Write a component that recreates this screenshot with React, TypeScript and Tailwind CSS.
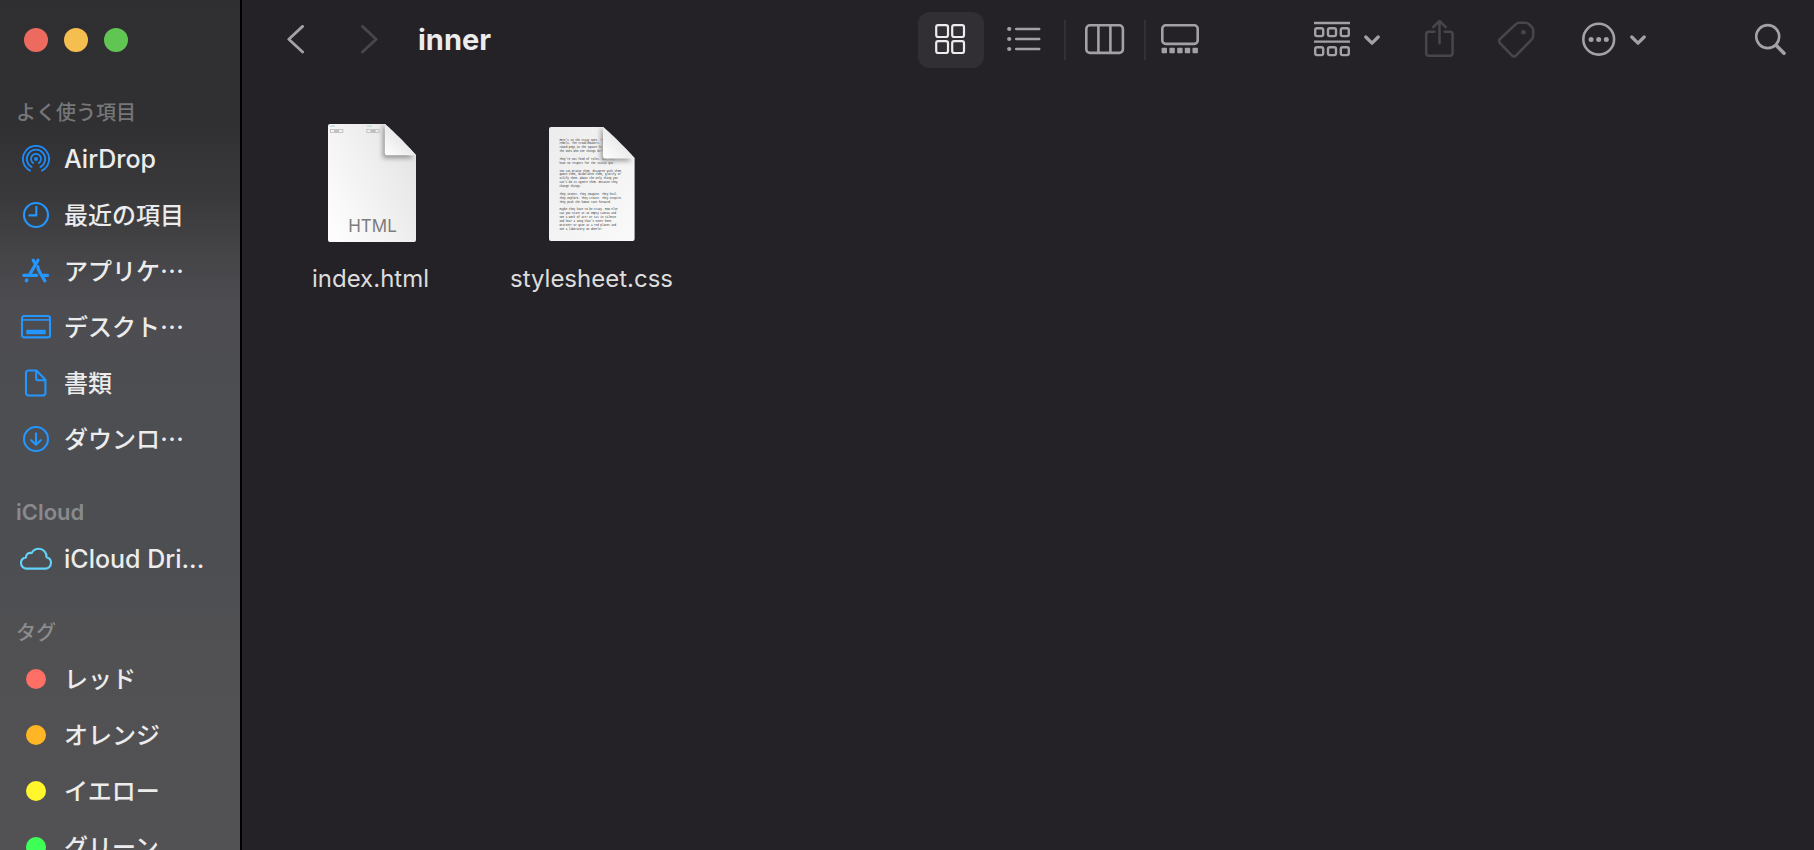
import type { ComponentProps, ComponentType, ReactNode } from 'react'

type SvgProps = ComponentProps<'svg'>

const AirDropIcon = (props: SvgProps) => (
  <svg width="28" height="28" viewBox="0 0 28 28" fill="none" stroke="#1e8bfa" strokeWidth="1.8" strokeLinecap="round" {...props}>
    <circle cx="14" cy="14" r="2" fill="#1e8bfa" stroke="none" />
    <path d="M11.2 18A5 5 0 1 1 16.8 18" />
    <path d="M9.6 22A9.2 9.2 0 1 1 18.4 22" />
    <path d="M8 25.6A13.1 13.1 0 1 1 20 25.6" />
  </svg>
)

const ClockIcon = (props: SvgProps) => (
  <svg width="28" height="28" viewBox="0 0 28 28" fill="none" stroke="#2396ff" strokeWidth="2.1" strokeLinecap="round" strokeLinejoin="round" {...props}>
    <circle cx="14" cy="14" r="12" />
    <path d="M14.3 5.8V14.4H7.4" />
  </svg>
)

const AppsIcon = (props: SvgProps) => (
  <svg width="28" height="28" viewBox="0 0 28 28" fill="none" stroke="#2396ff" strokeLinecap="round" strokeLinejoin="round" {...props}>
    <path d="M11.2 3.2L13.4 6.8M16 3.2L8.2 16.6" strokeWidth="3.2" />
    <path d="M1.8 18.3H14.8M21.4 18.3H25.6" strokeWidth="3.2" />
    <path d="M4.8 23L4.4 23.8" strokeWidth="3.4" />
    <path d="M15.8 9.6C15.8 12 17 13.8 18.4 16.2L22.9 23.9" strokeWidth="3.2" />
  </svg>
)

const DesktopIcon = (props: SvgProps) => (
  <svg width="32" height="28" viewBox="0 0 32 28" fill="none" stroke="#2396ff" strokeWidth="2.1" {...props}>
    <rect x="2" y="3" width="28" height="21.4" rx="2.2" />
    <path d="M2 6.9H30" strokeWidth="1.6" />
    <rect x="6.2" y="16.8" width="19.6" height="4.4" rx="1" fill="#2396ff" stroke="none" />
  </svg>
)

const DocumentIcon = (props: SvgProps) => (
  <svg width="28" height="28" viewBox="0 0 28 28" fill="none" stroke="#2396ff" strokeWidth="2.1" strokeLinejoin="round" {...props}>
    <path d="M6.3 1.5H14.4L23.4 10.8V24.2A2.3 2.3 0 0 1 21.1 26.5H6.3A2.3 2.3 0 0 1 4 24.2V3.8A2.3 2.3 0 0 1 6.3 1.5Z" />
    <path d="M14.2 2V9.6A1.6 1.6 0 0 0 15.8 11.2H23" />
  </svg>
)

const DownloadIcon = (props: SvgProps) => (
  <svg width="28" height="28" viewBox="0 0 28 28" fill="none" stroke="#2396ff" strokeWidth="2.1" strokeLinecap="round" strokeLinejoin="round" {...props}>
    <circle cx="14" cy="14" r="12" />
    <path d="M14 8.4V19.4M9.2 15.2L14 19.8L18.8 15.2" />
  </svg>
)

const CloudIcon = (props: SvgProps) => (
  <svg width="34" height="28" viewBox="0 0 34 28" fill="none" stroke="#62d2f8" strokeWidth="2.1" strokeLinejoin="round" {...props}>
    <path d="M7.6 23.6H26.4A5.7 5.7 0 0 0 32 18C32 15 30 12.9 27.6 12.3C27.7 7.4 24.3 3.8 19.8 3.8C16.6 3.8 14 5.3 12.7 8.1C9.6 7.2 7 9.2 6.9 12.4C4.1 13 2 15.2 2 18.1A5.6 5.6 0 0 0 7.6 23.6Z" />
  </svg>
)

const GridIcon = (props: SvgProps) => (
  <svg width="32" height="32" viewBox="0 0 32 32" fill="none" stroke="#ececed" strokeWidth="2.2" {...props}>
    <rect x="1.2" y="1.2" width="11.8" height="11.8" rx="2" />
    <rect x="17.2" y="1.2" width="11.8" height="11.8" rx="2" />
    <rect x="1.2" y="17.2" width="11.8" height="11.8" rx="2" />
    <rect x="17.2" y="17.2" width="11.8" height="11.8" rx="2" />
  </svg>
)

const ListIcon = (props: SvgProps) => (
  <svg width="34" height="26" viewBox="0 0 34 26" fill="#a3a1a6" stroke="#a3a1a6" strokeWidth="2.5" strokeLinecap="round" {...props}>
    <path d="M9.2 2H32.2M9.2 12H32.2M9.2 22H32.2" />
    <g stroke="none">
      <circle cx="2.2" cy="2" r="2.1" />
      <circle cx="2.2" cy="12" r="2.1" />
      <circle cx="2.2" cy="22" r="2.1" />
    </g>
  </svg>
)

const ColumnsIcon = (props: SvgProps) => (
  <svg width="40" height="32" viewBox="0 0 40 32" fill="none" stroke="#a3a1a6" strokeWidth="2.6" {...props}>
    <rect x="1.3" y="1.3" width="36.6" height="27.6" rx="3.6" />
    <path d="M13.4 1V29M25.4 1V29" />
  </svg>
)

const GalleryIcon = (props: SvgProps) => (
  <svg width="38" height="32" viewBox="0 0 38 32" fill="#a3a1a6" {...props}>
    <rect x="1.3" y="1.3" width="35.4" height="18.6" rx="3.4" fill="none" stroke="#a3a1a6" strokeWidth="2.6" />
    {[0.6, 8.4, 16.2, 23.8, 31.5].map((x) => (
      <rect key={x} x={x} y="23.8" width="5.4" height="5.4" rx="0.8" />
    ))}
  </svg>
)

const GroupIcon = (props: SvgProps) => (
  <svg width="38" height="38" viewBox="0 0 38 38" fill="none" stroke="#a3a1a6" strokeWidth="2.4" {...props}>
    <path d="M0 2H36M0 20.6H36" />
    {[7.2, 26.2].map((y) =>
      [1.2, 14, 26.8].map((x) => (
        <rect key={`${x}-${y}`} x={x} y={y} width="8" height="7.9" rx="1.8" />
      ))
    )}
  </svg>
)

const ChevronDownIcon = (props: SvgProps) => (
  <svg width="16" height="10" viewBox="0 0 16 10" fill="none" stroke="#a3a1a6" strokeWidth="3.2" strokeLinecap="round" strokeLinejoin="round" {...props}>
    <path d="M1.8 2L8 8.2L14.2 2" />
  </svg>
)

const ShareIcon = (props: SvgProps) => (
  <svg width="30" height="42" viewBox="0 0 30 42" fill="none" stroke="#48464c" strokeWidth="2.5" strokeLinecap="round" strokeLinejoin="round" {...props}>
    <path d="M10.4 12.8H5A2.8 2.8 0 0 0 2.2 15.6V34A2.8 2.8 0 0 0 5 36.8H25.8A2.8 2.8 0 0 0 28.6 34V15.6A2.8 2.8 0 0 0 25.8 12.8H20.6" />
    <path d="M15.5 24.2V2.4M9.2 8.2L15.5 2L21.8 8.2" />
  </svg>
)

const TagIcon = (props: SvgProps) => (
  <svg width="40" height="38" viewBox="0 0 40 38" fill="none" stroke="#48464c" strokeWidth="2.5" strokeLinejoin="round" {...props}>
    <path d="M21.4 1.8H27.6C28.9 1.8 29.8 2.1 30.7 3L34 6.2C34.9 7.1 35.2 8 35.2 9.2V15C35.2 16.4 34.8 17.4 33.8 18.4L18.2 34.4C16.8 35.8 15.2 35.8 13.8 34.4L2 22.2C0.6 20.8 0.8 19.2 2 18L17.6 3.4C18.7 2.3 19.8 1.8 21.4 1.8Z" />
    <circle cx="25.4" cy="11.2" r="2.3" fill="#48464c" stroke="none" />
  </svg>
)

const MoreIcon = (props: SvgProps) => (
  <svg width="34" height="36" viewBox="0 0 34 36" fill="#a3a1a6" {...props}>
    <circle cx="16.7" cy="17.2" r="15.4" fill="none" stroke="#a3a1a6" strokeWidth="2.6" />
    <circle cx="9.1" cy="17.4" r="2.5" />
    <circle cx="16.7" cy="17.4" r="2.5" />
    <circle cx="24.3" cy="17.4" r="2.5" />
  </svg>
)

const SearchIcon = (props: SvgProps) => (
  <svg width="32" height="34" viewBox="0 0 32 34" fill="none" stroke="#a3a1a6" strokeLinecap="round" {...props}>
    <circle cx="13.7" cy="13.6" r="11.5" strokeWidth="2.6" />
    <path d="M22.6 22.8L30 30.2" strokeWidth="3.6" />
  </svg>
)

const BackIcon = (props: SvgProps) => (
  <svg width="18" height="30" viewBox="0 0 18 30" fill="none" stroke="currentColor" strokeWidth="2.8" strokeLinecap="round" strokeLinejoin="round" {...props}>
    <path d="M15.6 1.4L1.8 14.2L15.6 27" />
  </svg>
)

const HtmlFileIcon = () => (
  <svg width="128" height="128" viewBox="-1 0 128 128" fill="none">
    <defs>
      <linearGradient id="html-page" x1="0" y1="0.8" x2="1" y2="0.2">
        <stop offset="0" stopColor="#fdfdfd" />
        <stop offset="0.45" stopColor="#f2f2f2" />
        <stop offset="1" stopColor="#e4e4e4" />
      </linearGradient>
      <linearGradient id="html-fold" x1="0" y1="1" x2="0.6" y2="0.4">
        <stop offset="0" stopColor="#ffffff" />
        <stop offset="1" stopColor="#e6e6e6" />
      </linearGradient>
      <filter id="fold-shadow" x="-50%" y="-50%" width="200%" height="200%">
        <feGaussianBlur stdDeviation="2.6" />
      </filter>
      <clipPath id="html-clip">
        <path d="M22 5H77L108 36V121A2 2 0 0 1 106 123H22A2 2 0 0 1 20 121V7A2 2 0 0 1 22 5Z" />
      </clipPath>
    </defs>
    <g clipPath="url(#html-clip)">
      <rect x="20" y="5" width="88" height="118" fill="url(#html-page)" />
      <path d="M75 5V39H106Z" fill="#909090" filter="url(#fold-shadow)" />
      <rect x="22" y="6.4" width="5" height="1.4" fill="#b9dcd6" />
      <rect x="22.5" y="10.5" width="12.4" height="3" stroke="#bbbbbb" strokeWidth="0.8" />
      <rect x="26" y="11.6" width="5" height="0.8" fill="#777777" />
      <rect x="59" y="6.4" width="5" height="1.4" fill="#b9dcd6" />
      <rect x="58.8" y="10.5" width="12.4" height="3" stroke="#bbbbbb" strokeWidth="0.8" />
      <rect x="62.6" y="11.6" width="5" height="0.8" fill="#777777" />
    </g>
    <path d="M76.8 5C80 6.6 105.6 32 108 36.2H79A2.2 2.2 0 0 1 76.8 34Z" fill="url(#html-fold)" />
    <text x="64.5" y="113" textAnchor="middle" fontSize="17" fill="#7c7c7c" fontFamily="Inter, sans-serif">
      HTML
    </text>
  </svg>
)

const pageLines = [
  "Here's to the crazy ones. The",
  'rebels. The troublemakers. The',
  'round pegs in the square holes.',
  'The ones who see things diffe',
  '',
  "They're not fond of rules. And they",
  'have no respect for the status quo.',
  '',
  'You can praise them, disagree with them,',
  'quote them, disbelieve them, glorify or',
  'vilify them. About the only thing you',
  "can't do is ignore them. Because they",
  'change things.',
  '',
  'They invent. They imagine. They heal.',
  'They explore. They create. They inspire.',
  'They push the human race forward.',
  '',
  'Maybe they have to be crazy. How else',
  'can you stare at an empty canvas and',
  'see a work of art? Or sit in silence',
  "and hear a song that's never been",
  'written? Or gaze at a red planet and',
  'see a laboratory on wheels?',
]

const TextFileIcon = () => (
  <svg width="128" height="128" viewBox="1 0 128 128" fill="none">
    <defs>
      <linearGradient id="text-page" x1="0" y1="0" x2="1" y2="1">
        <stop offset="0" stopColor="#ececec" />
        <stop offset="1" stopColor="#fafafa" />
      </linearGradient>
      <linearGradient id="text-fold" x1="0" y1="1" x2="0.6" y2="0.4">
        <stop offset="0" stopColor="#ffffff" />
        <stop offset="1" stopColor="#e8e8e8" />
      </linearGradient>
      <clipPath id="text-clip">
        <path d="M24 8H76L107.6 39V120A2 2 0 0 1 105.6 122H24A2 2 0 0 1 22 120V10A2 2 0 0 1 24 8Z" />
      </clipPath>
    </defs>
    <g clipPath="url(#text-clip)">
      <rect x="22" y="8" width="86" height="114" fill="url(#text-page)" />
      <g fontSize="2.64" fill="#2a2a2a" fontFamily="'Liberation Mono', monospace">
        {pageLines.map((line, i) => (
          <text key={i} x="32.4" y={21.6 + i * 3.87}>
            {line}
          </text>
        ))}
      </g>
      <path d="M74 8V42H105Z" fill="#9a9a9a" filter="url(#fold-shadow)" />
    </g>
    <path d="M76 8C79.4 9.6 105 35.2 107.6 39.4H78.2A2.2 2.2 0 0 1 76 37.2Z" fill="url(#text-fold)" />
  </svg>
)

const favorites = [
  { label: 'AirDrop', icon: AirDropIcon },
  { label: '最近の項目', icon: ClockIcon },
  { label: 'アプリケ…', icon: AppsIcon },
  { label: 'デスクト…', icon: DesktopIcon },
  { label: '書類', icon: DocumentIcon },
  { label: 'ダウンロ…', icon: DownloadIcon },
]

const tags = [
  { label: 'レッド', color: 'bg-[#ff6f65]' },
  { label: 'オレンジ', color: 'bg-[#ffb524]' },
  { label: 'イエロー', color: 'bg-[#fff62b]' },
  { label: 'グリーン', color: 'bg-[#3dff56]' },
]

const files: { name: string; icon: ComponentType }[] = [
  { name: 'index.html', icon: HtmlFileIcon },
  { name: 'stylesheet.css', icon: TextFileIcon },
]

const isLatin = (text: string) => /^[A-Za-z]/.test(text)

const latinFont = "font-['Inter',sans-serif]"
const japaneseFont = "font-['Noto_Sans_CJK_JP',sans-serif]"

type SectionProps = {
  title: string
  children: ReactNode
}

const SidebarSection = (props: SectionProps) => (
  <section className="mb-[26px]">
    <h2
      className={`flex h-[38px] items-center pl-4 text-white/35 ${
        isLatin(props.title) ? `${latinFont} text-[22px] font-semibold` : `${japaneseFont} text-[20px] font-medium`
      }`}
    >
      {props.title}
    </h2>
    <ul>{props.children}</ul>
  </section>
)

type ItemProps = {
  label: string
  children: ReactNode
}

const SidebarItem = (props: ItemProps) => (
  <li>
    <button type="button" className="flex h-14 w-full items-center whitespace-nowrap pl-4 text-left text-[#ececec]">
      <span className="mr-2 flex w-10 shrink-0 justify-center">{props.children}</span>
      <span className={isLatin(props.label) ? `${latinFont} pt-0.5 text-[25px] font-medium` : `${japaneseFont} pb-0.5 text-[24px] font-medium`}>
        {props.label}
      </span>
    </button>
  </li>
)

const Sidebar = () => (
  <aside className="w-[242px] shrink-0 overflow-hidden border-r-2 border-black bg-[linear-gradient(180deg,#2f2f31_0px,#303033_120px,#3a3a3d_200px,#454548_255px,#4d4c51_305px,#4c4e52_400px,#4d4e52_560px,#515153_660px,#525254_850px)]">
    <div className="mb-[13px] flex h-20 items-center gap-4 pl-6">
      <button type="button" aria-label="閉じる" className="size-6 rounded-full bg-[#ed6a5e]" />
      <button type="button" aria-label="しまう" className="size-6 rounded-full bg-[#f5bf4f]" />
      <button type="button" aria-label="拡大" className="size-6 rounded-full bg-[#61c554]" />
    </div>
    <nav>
      <SidebarSection title="よく使う項目">
        {favorites.map((item) => (
          <SidebarItem key={item.label} label={item.label}>
            <item.icon />
          </SidebarItem>
        ))}
      </SidebarSection>
      <SidebarSection title="iCloud">
        <SidebarItem label="iCloud Dri...">
          <CloudIcon />
        </SidebarItem>
      </SidebarSection>
      <SidebarSection title="タグ">
        {tags.map((tag) => (
          <SidebarItem key={tag.label} label={tag.label}>
            <span className={`size-5 rounded-full ${tag.color}`} />
          </SidebarItem>
        ))}
      </SidebarSection>
    </nav>
  </aside>
)

const Toolbar = () => (
  <header className="flex h-20 items-center pl-[45px] pr-7">
    <button type="button" aria-label="戻る" className="mr-[55px] text-[#a3a1a6]">
      <BackIcon />
    </button>
    <button type="button" aria-label="進む" disabled className="mr-10 text-[#48464c]">
      <BackIcon className="rotate-y-180" />
    </button>
    <h1 className={`${latinFont} flex-1 text-[29px] font-bold leading-9 text-[#ececec]`}>inner</h1>

    <div className="mr-[100px] flex items-center">
      <button type="button" aria-label="アイコン" className="flex h-14 w-[66px] items-center justify-center rounded-xl bg-[#312f34]">
        <GridIcon />
      </button>
      <button type="button" aria-label="リスト" className="flex h-14 w-20 items-center justify-center">
        <ListIcon />
      </button>
      <span className="h-10 w-0.5 bg-[#323036]" />
      <button type="button" aria-label="カラム" className="flex h-14 w-[78px] items-center justify-center">
        <ColumnsIcon />
      </button>
      <span className="h-10 w-0.5 bg-[#323036]" />
      <button type="button" aria-label="ギャラリー" className="flex h-14 w-[68px] items-center justify-center">
        <GalleryIcon />
      </button>
    </div>

    <div className="mr-[108px] flex items-center gap-11">
      <button type="button" aria-label="グループ" className="flex items-center gap-3">
        <GroupIcon />
        <ChevronDownIcon />
      </button>
      <button type="button" aria-label="共有" disabled>
        <ShareIcon />
      </button>
      <button type="button" aria-label="タグを編集" disabled>
        <TagIcon />
      </button>
      <button type="button" aria-label="その他" className="flex items-center gap-3.5">
        <MoreIcon />
        <ChevronDownIcon />
      </button>
    </div>

    <button type="button" aria-label="検索">
      <SearchIcon />
    </button>
  </header>
)

const App = () => {
  return (
    <div lang="ja" className="flex h-screen overflow-hidden bg-[#242227]">
      <Sidebar />
      <main className="min-w-0 flex-1">
        <Toolbar />
        <ul className="flex flex-wrap pl-[18px] pt-[39px]">
          {files.map((file) => (
            <li key={file.name} className="w-[221px]">
              <button type="button" className="flex w-full flex-col items-center gap-4">
                <file.icon />
                <span className={`${latinFont} text-[24px] leading-8 text-[#dddddd]`}>{file.name}</span>
              </button>
            </li>
          ))}
        </ul>
      </main>
    </div>
  )
}

export default App
